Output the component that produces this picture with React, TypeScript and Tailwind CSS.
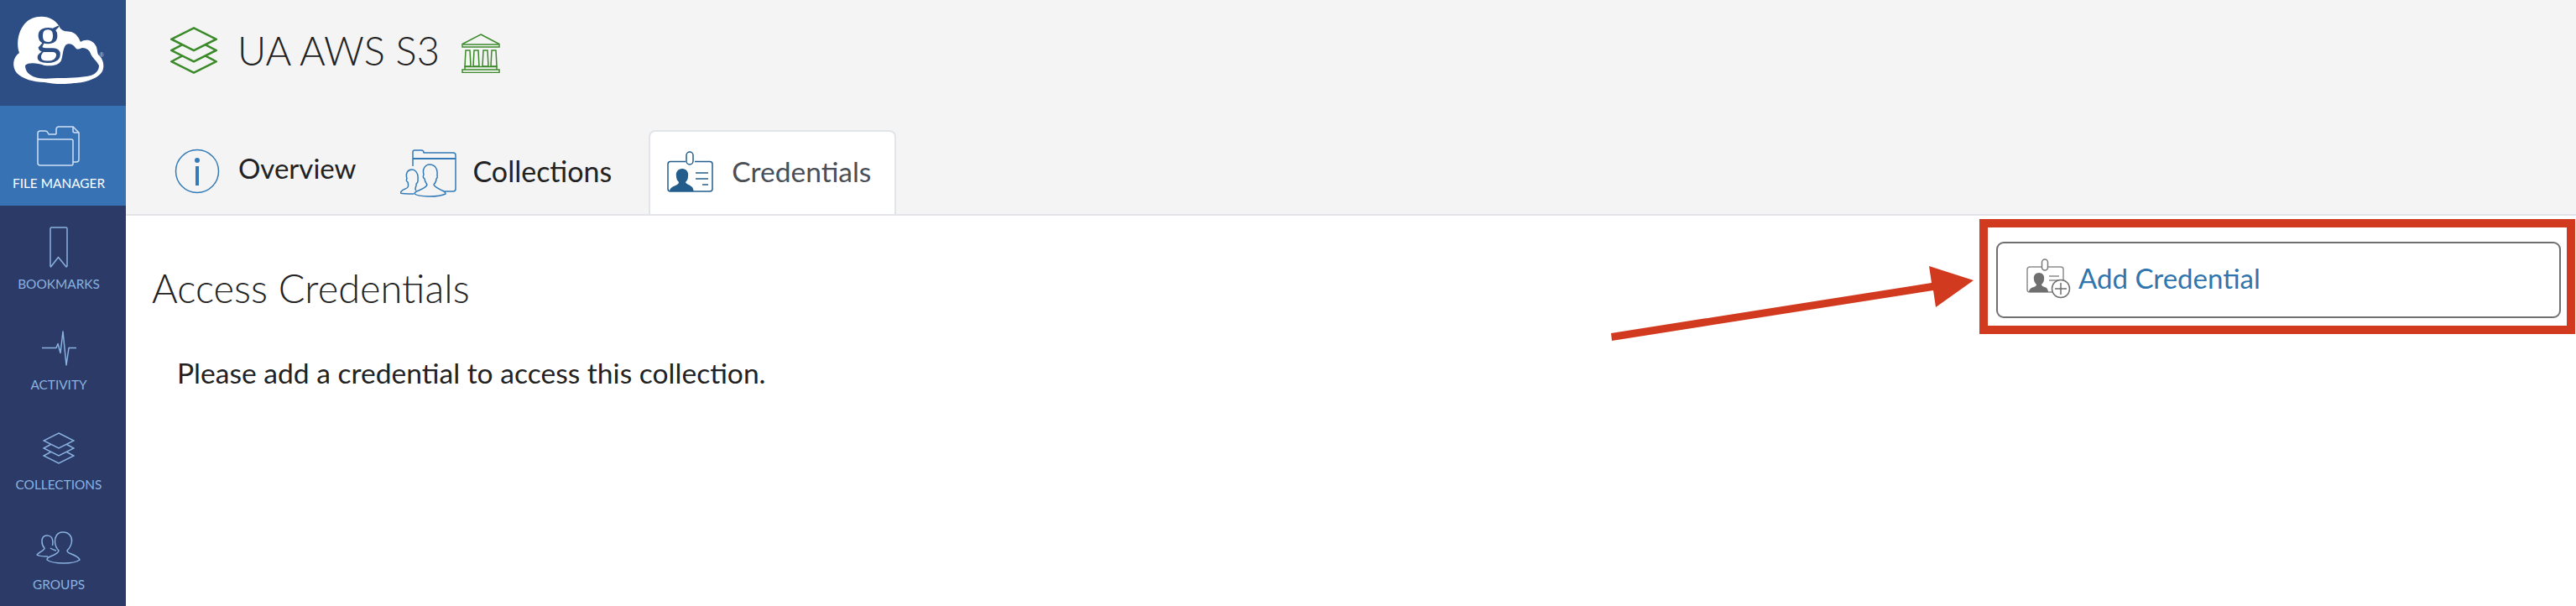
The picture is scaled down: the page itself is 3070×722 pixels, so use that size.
import React from 'react';

const navItems = [
  { label: 'BOOKMARKS', icon: <BookmarkIcon /> },
  { label: 'ACTIVITY', icon: <ActivityIcon /> },
  { label: 'COLLECTIONS', icon: <LayersIcon /> },
  { label: 'GROUPS', icon: <GroupsIcon /> },
];

function GlobusLogo() {
  return (
    <svg width="150" height="126" viewBox="0 0 150 126">
      <path
        fill="#fff"
        d="M23 63C18 48 24 28 38 22C50 17 66 20 72 34C76 38 80 37 85 38C91 40 94 45 96 50C102 46 111 47 115 56C116 60 116 63 117 65C123 70 125 78 122 85C116 95 98 99 88 99C76 101 62 100 53 98C40 98 27 94 20 87C14 80 15 68 23 63Z"
      />
      <path
        fill="#2d4d85"
        d="M30 78C34 74 44 75 53 78C62 79 70 78 73 72C75 66 75 58 78 54C81 51 87 52 90 57C92 60 95 58 98 57C103 57 107 60 108 64C110 69 115 72 118 78C118 84 114 88 108 90C100 92 86 93 73 93C62 93 50 95 42 92C36 90 30 86 30 78Z"
      />
      <text x="57.500" y="62" textAnchor="middle" fill="#2d4d85" fontFamily="'Liberation Serif', serif" fontSize="62">
        g
      </text>
      <text x="121" y="68" textAnchor="middle" fill="#c9d3e3" fontFamily="'Liberation Sans', sans-serif" fontSize="7">
        ®
      </text>
    </svg>
  );
}

function FolderIcon() {
  return (
    <svg width="52" height="48" viewBox="0 0 52 48" fill="none" stroke="#cfe0f3" strokeWidth="1.5" strokeLinejoin="round">
      <path d="M1 16V9a3 3 0 0 1 3-3h6a3 3 0 0 1 3 2l1 2h9" />
      <path d="M23 10V4a3 3 0 0 1 3-3h17l7 7v32a3 3 0 0 1-3 3h-4" />
      <path d="M43 1v5a2 2 0 0 0 2 2h5" />
      <path d="M3 16h38a2 2 0 0 1 2 2v27a2 2 0 0 1-2 2H4a3 3 0 0 1-3-3V16z" />
    </svg>
  );
}

function BookmarkIcon() {
  return (
    <svg width="24" height="50" viewBox="0 0 24 50" fill="none" stroke="#8ab2e0" strokeWidth="1.5" strokeLinejoin="round">
      <path d="M2 2.500a1.500 1.500 0 0 1 1.500-1.500h17a1.500 1.500 0 0 1 1.500 1.500V47l-1 1-9.500-11.500L2.500 48l-.500-1z" />
    </svg>
  );
}

function ActivityIcon() {
  return (
    <svg width="42" height="42" viewBox="0 0 42 42" fill="none" stroke="#8ab2e0" strokeWidth="1.500" strokeLinejoin="round">
      <path d="M1 20.500h17l2-5 3 11 3-25.500 4 40 3-20.500h9" />
    </svg>
  );
}

function LayersIcon({ stroke = '#8ab2e0', width = 38, sw = 1.5 }: { stroke?: string; width?: number; sw?: number }) {
  return (
    <svg width={width} height={width} viewBox="0 0 38 38" fill="none" stroke={stroke} strokeWidth={sw} strokeLinejoin="miter">
      <path d="M19 1L37 10L19 19L1 10Z" />
      <path d="M9.500 14.500L1 19L19 28L37 19L28.500 14.500" />
      <path d="M9.500 23.500L1 28L19 37L37 28L28.500 23.500" />
    </svg>
  );
}

function GroupsIcon() {
  return (
    <svg width="54" height="40" viewBox="0 0 54 40" fill="none" stroke="#8ab2e0" strokeWidth="1.500" strokeLinejoin="round">
      <path d="M32 1C25 1 22 7 22.500 13C23 18 25 21 27 23C27 26 22 28 17 30C14 31 13 32 13 34C17 37 25 38 33 38C41 38 48 37 52 34C51 31 47 29 42 27C39 26 37 25 37 23C40 20 42 17 42.500 12C43 6 39 1 32 1Z" />
      <path d="M19.500 17C20 15 20 12 19.500 10C19 7 16 5 13 5C9 5 7 8 7 12C7 15 8 18 10 20C10 23 5 24 2 27L1 28C4 30 9 30 14 30" />
      <path d="M17 20C18 21 21 22 24 23" />
    </svg>
  );
}

function InfoIcon() {
  return (
    <svg width="54" height="54" viewBox="0 0 54 54" fill="none">
      <circle cx="27" cy="27" r="25.500" stroke="#337ab7" strokeWidth="1.500" />
      <circle cx="27" cy="14" r="3" fill="#337ab7" />
      <rect x="25" y="21" width="4" height="23" fill="#337ab7" />
    </svg>
  );
}

function CollectionsIcon() {
  return (
    <svg width="68" height="58" viewBox="0 0 68 58" fill="none" stroke="#337ab7" strokeWidth="1.500" strokeLinejoin="round">
      <path d="M15 20V3a2 2 0 0 1 2-2h8a3 3 0 0 1 3 3h35a3 3 0 0 1 3 3v40a3 3 0 0 1-3 3H53" />
      <path d="M15 11h51" strokeWidth="2" />
      <path d="M19 49c-3-2 1-5 0-8 3-2 2-4 2-5 1-9-4-12-7-12-5 0-8 4-6 11-1 1-1 3 1 4 1 4 1 7-3 8-3 1-5 2-6 5 3 1 10 1 16 1" />
      <path d="M35 18c6 0 10 5 9 12 0 2 1 4-1 5 0 3-1 5-3 7 1 3 6 5 10 7 3 1 4 2 4 4-4 2-12 3-19 3s-15-1-18-3c0-2 2-3 5-4 5-2 9-4 10-7-1-2-3-4-3-7-2-1-2-3-1-5-2-7 2-12 7-12z" />
    </svg>
  );
}

function CredentialIcon() {
  return (
    <svg width="56" height="50" viewBox="0 0 56 50" fill="none">
      <path d="M22 12.500H4a3 3 0 0 0-3 3V45a3 3 0 0 0 3 3h47a3 3 0 0 0 3-3V15.500a3 3 0 0 0-3-3H33" stroke="#235d8b" strokeWidth="1.500" />
      <rect x="23" y="1" width="8" height="15" rx="4" stroke="#235d8b" strokeWidth="1.500" />
      <path fill="#235d8b" d="M18 21c5 0 8 4 7 9 0 3-1 5-3 7 0 2 5 3 8 6 1 1 1 3 2 5H3c0-2 1-4 3-5 3-2 8-3 8-6-2-2-3-4-3-7-1-5 2-9 7-9z" />
      <path d="M34 26h15M34 33h15M42 40h7" stroke="#235d8b" strokeWidth="1.500" />
    </svg>
  );
}

function AddCredentialIcon() {
  return (
    <svg width="54" height="48" viewBox="0 0 54 48" fill="none">
      <path d="M18 10H4a3 3 0 0 0-3 3v24a3 3 0 0 0 3 3h28M26 10h15a3 3 0 0 1 3 3v13" stroke="#8d8d8d" strokeWidth="1.500" />
      <rect x="18.500" y="1" width="7" height="13" rx="3.500" stroke="#7a7a7a" strokeWidth="1.500" />
      <path fill="#6f6f6f" d="M15 17c4 0 7 3 6 8 0 2-1 4-3 6 0 2 4 3 6 4 1 1 2 3 2 5H3c0-2 1-4 3-5 3-1 6-2 6-4-2-2-3-4-3-6-1-5 2-8 6-8z" />
      <path d="M27 21h12M27 26h12" stroke="#8d8d8d" strokeWidth="1.500" />
      <circle cx="41" cy="36" r="10.500" fill="#fff" stroke="#6f6f6f" strokeWidth="1.500" />
      <path d="M41 29v14M34 36h14" stroke="#6f6f6f" strokeWidth="1.500" />
    </svg>
  );
}

function BankIcon() {
  return (
    <svg width="48" height="48" viewBox="0 0 48 48" fill="none" stroke="#3b8a2a" strokeWidth="1.500">
      <path d="M24 2L46 13.500V17H2V13.500z" />
      <path d="M3 14h42" />
      <path d="M6 21h5l1 19H5zM16 21h5l1 19h-7zM27 21h5l1 19h-7zM37 21h5l1 19h-7z" />
      <path d="M5 40.500h38V44H5zM2 44h44v3.500H2z" />
    </svg>
  );
}

export default function App() {
  return (
    <div className="relative flex h-[722px] w-[3070px] overflow-hidden bg-white font-['Lato','Noto_Sans',sans-serif] text-[#222]">
      <aside className="flex w-[150px] shrink-0 flex-col bg-[#2b3a66]">
        <div className="flex h-[126px] items-center justify-center bg-[#2d4d85]">
          <GlobusLogo />
        </div>
        <div className="flex h-[120px] flex-col items-center bg-[#3772b5] pr-[10px] pt-[24px] text-white">
          <FolderIcon />
          <span className="mt-[10px] text-[15.400px] leading-[20px]">FILE MANAGER</span>
        </div>
        {navItems.map((item) => (
          <div key={item.label} className="flex h-[120px] flex-col items-center pr-[10px] text-[#8ab2e0]">
            <div className="flex h-[84px] items-center justify-center pt-[16px]">{item.icon}</div>
            <span className="mt-[-1px] text-[15.400px] leading-[20px]">{item.label}</span>
          </div>
        ))}
      </aside>

      <main className="flex min-w-0 flex-1 flex-col">
        <header className="flex h-[257px] flex-col border-b-2 border-[#e1e5e9] bg-[#f4f4f4]">
          <div className="flex h-[157px] items-start pl-[53px] pt-[32px]">
            <LayersIcon stroke="#3b8a2a" width={56} sw={1.7} />
            <h1 className="ml-[24px] mt-[-2px] text-[47px] font-light leading-[60px]">UA AWS S3</h1>
            <div className="ml-[25px] mt-[7px]">
              <BankIcon />
            </div>
          </div>
          <nav className="flex h-[100px] items-start">
            <div className="ml-[58px] flex h-[98px] items-center pb-[6px]">
              <div className="mt-[6px]">
                <InfoIcon />
              </div>
              <span className="ml-[22px] text-[33px]">Overview</span>
            </div>
            <div className="ml-[53px] flex h-[98px] items-center pb-[2px]">
              <div className="mt-[8px]">
                <CollectionsIcon />
              </div>
              <span className="ml-[18px] text-[34px]">Collections</span>
            </div>
            <div className="ml-[44px] flex h-[100px] w-[295px] items-center rounded-t-[8px] border-2 border-b-0 border-[#e1e5e9] bg-white pb-[2px] pl-[20px] text-[#4a4f57]">
              <CredentialIcon />
              <span className="mb-[2px] ml-[21px] text-[33.500px]">Credentials</span>
            </div>
          </nav>
        </header>

        <section className="flex items-start justify-between">
          <div className="pl-[31px] pt-[58px]">
            <h2 className="text-[47px] font-light leading-[56px]">Access Credentials</h2>
            <p className="ml-[30px] mt-[51px] text-[33.6px] leading-[44px]">Please add a credential to access this collection.</p>
          </div>
          <button className="mr-[18px] mt-[31px] flex h-[91px] w-[673px] items-center rounded-[9px] border-2 border-[#6f6f6f] pb-[4px] pl-[34px] text-[33px] text-[#2f75ae]">
            <AddCredentialIcon />
            <span className="ml-[8px]">Add Credential</span>
          </button>
        </section>
      </main>

      {/* annotation drawn over the screenshot */}
      <div className="absolute left-[2359px] top-[261px] h-[137px] w-[710px] border-[10px] border-[#d13a1f]" />
      <svg className="absolute left-[1900px] top-[310px]" width="460" height="100" viewBox="0 0 460 100">
        <path fill="#d13a1f" d="M20 87L402 27L399 7L452 24L407 56L404 36L21 96Z" />
      </svg>
    </div>
  );
}
